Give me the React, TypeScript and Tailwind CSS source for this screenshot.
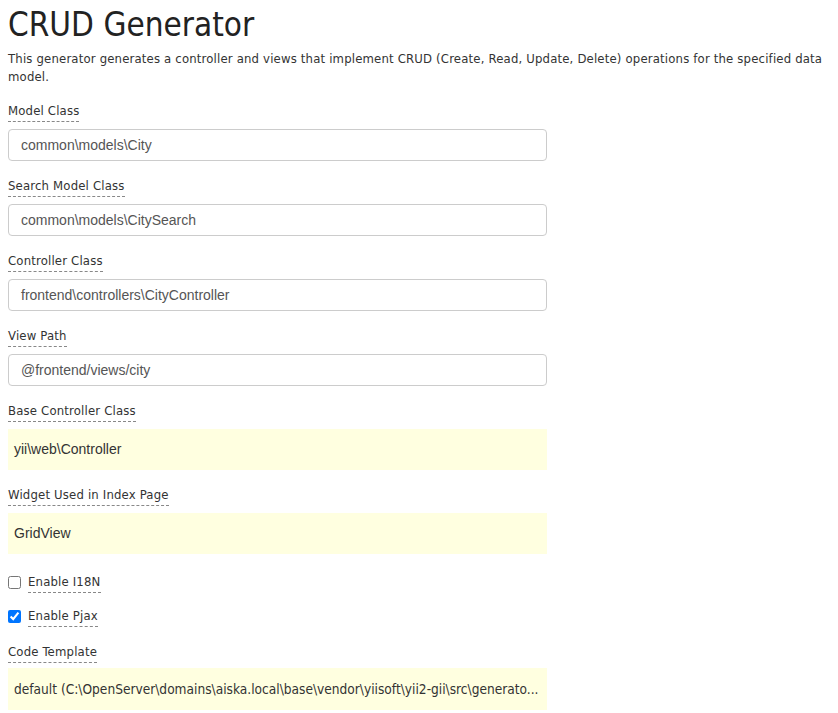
import { useState } from "react";

const TextField = ({ label, value }: { label: string; value: string }) => (
  <div className="mb-[15px]">
    <div className="mb-[7px]">
      <span className="inline-block border-b border-dashed border-[#888] leading-[20px]">
        {label}
      </span>
    </div>
    <div className="h-[32px] border border-[#ccc] rounded-[4px] px-3 flex items-center font-['Liberation_Sans',sans-serif] tracking-normal text-[14px] text-[#555]">
      {value}
    </div>
  </div>
);

const StickyField = ({ label, value, last }: { label: string; value: string; last?: boolean }) => (
  <div className={last ? "mb-[18px]" : "mb-[15px]"}>
    <div className="mb-[7px]">
      <span className="inline-block border-b border-dashed border-[#888] leading-[20px]">
        {label}
      </span>
    </div>
    <div className="h-[41px] bg-[#ffffe0] px-[6px] flex items-center font-['Liberation_Sans',sans-serif] tracking-normal text-[14px] text-[#333]">
      {value}
    </div>
  </div>
);

const CheckField = ({ label, checked, last }: { label: string; checked?: boolean; last?: boolean }) => {
  const [on, setOn] = useState(!!checked);
  return (
    <div className={"flex items-center gap-[7px] " + (last ? "mb-[15px]" : "mb-[13px]")}>
      <input
        type="checkbox"
        checked={on}
        onChange={() => setOn(!on)}
        className="w-[13px] h-[13px] m-0 accent-[#0075ff]"
      />
      <span className="inline-block border-b border-dashed border-[#888] leading-[20px]">
        {label}
      </span>
    </div>
  );
};

export default function App() {
  return (
    <div className="bg-white min-h-screen px-2 pt-[5px] text-[13px] tracking-[0.17px] text-[#333] font-['DejaVu_Sans_Condensed','DejaVu_Sans',sans-serif]">
      <h1 className="text-[33px] leading-[40px] tracking-normal text-[#222] m-0">CRUD Generator</h1>
      <p className="leading-[18px] mt-[5px] mb-[15px] w-[826px]">
        This generator generates a controller and views that implement CRUD (Create, Read, Update, Delete)
        operations for the specified data model.
      </p>
      <div className="w-[539px]">
        <TextField label="Model Class" value="common\models\City" />
        <TextField label="Search Model Class" value="common\models\CitySearch" />
        <TextField label="Controller Class" value="frontend\controllers\CityController" />
        <TextField label="View Path" value="@frontend/views/city" />
        <StickyField label="Base Controller Class" value="yii\web\Controller" />
        <StickyField label="Widget Used in Index Page" value="GridView" last />
        <CheckField label="Enable I18N" />
        <CheckField label="Enable Pjax" checked last />
        <div>
          <div className="mb-[5px]">
            <span className="inline-block border-b border-dashed border-[#888] leading-[20px]">
              Code Template
            </span>
          </div>
          <div className="h-[42px] bg-[#ffffe0] px-[6px] flex items-center text-[13.6px] tracking-normal text-[#333] whitespace-nowrap">
            default (C:\OpenServer\domains\aiska.local\base\vendor\yiisoft\yii2-gii\src\generato...
          </div>
        </div>
      </div>
    </div>
  );
}
